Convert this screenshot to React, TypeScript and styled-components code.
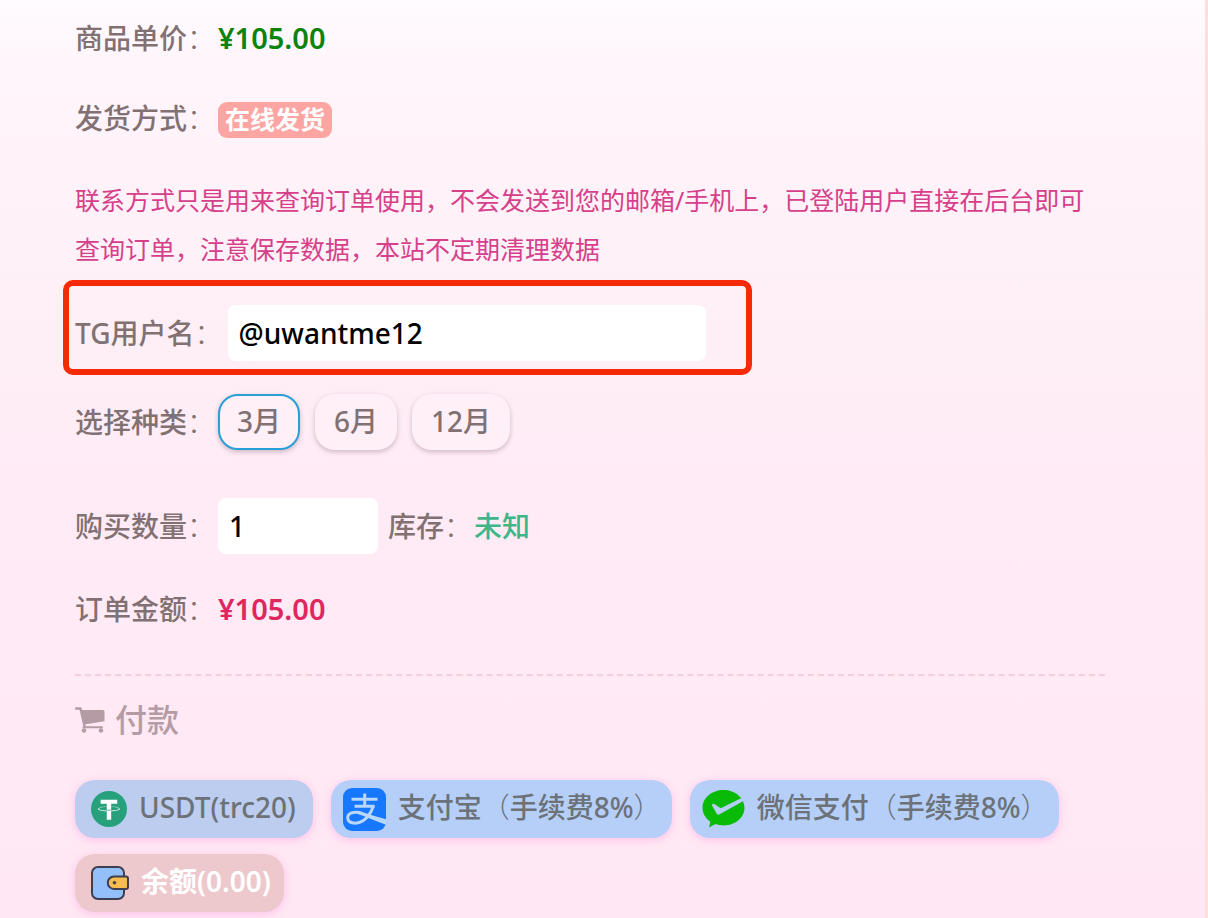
import React, { useState } from "react";
import styled, { createGlobalStyle, css } from "styled-components";

const GlobalStyle = createGlobalStyle`
  *, *::before, *::after { box-sizing: border-box; }
  body { margin: 0; background: #ffe8f3; }
  button, input { font: inherit; }
`;

const Page = styled.main`
  min-height: 100vh;
  padding: 18px 100px 6px 75px;
  border-right: 3px solid #fbdfdf;
  background: linear-gradient(#fffbfe 0, #fff5fb 70px, #feeff6 340px, #ffebf6 480px, #ffe8f3 100%);
  color: #817173;
  font: 500 28px/40px "Noto Sans", "Noto Sans CJK SC", sans-serif;
`;

const Row = styled.div<{ $space: number }>`
  display: flex;
  flex-wrap: wrap;
  align-items: center;
  margin-bottom: ${(p) => p.$space}px;
`;

const labelStyle = css`
  flex: none;
  min-width: 143px;
`;

const Label = styled.span`
  ${labelStyle}
`;

const FieldLabel = styled.label`
  ${labelStyle}
`;

const UserLabel = styled(FieldLabel)`
  padding-right: 5px;
`;

const Mark = styled.span`
  font-weight: 300;
`;

const Price = styled.strong<{ $color: string }>`
  color: ${(p) => p.$color};
  font-size: 29px;
  font-weight: 600;
`;

const Badge = styled.span`
  margin-top: 4px;
  padding: 0 7px 2px;
  border-radius: 9px;
  background: #fda5a3;
  color: #fff;
  font-size: 25px;
  font-weight: 600;
  line-height: 34px;
`;

const Notice = styled.p`
  margin: 0 0 31px;
  color: #d6408a;
  font-size: 25px;
  font-weight: 400;
  line-height: 49px;
`;

const Highlighted = styled(Row)`
  position: relative;

  &::after {
    content: "";
    position: absolute;
    inset: -25px auto -14px -12px;
    width: 689px;
    border: 6px solid #f52a06;
    border-radius: 10px;
    pointer-events: none;
  }
`;

const TextField = styled.input<{ $width: number }>`
  width: ${(p) => p.$width}px;
  height: 56px;
  padding: 0 11px;
  border: 0;
  border-radius: 8px;
  background: #fff;
  color: #000;
  outline: 0;
`;

const Options = styled.div`
  display: flex;
  gap: 15px;
`;

const Option = styled.button<{ $active: boolean }>`
  height: 56px;
  padding: 0 17px 3px;
  border: 2px solid ${(p) => (p.$active ? "#2a9fd6" : "transparent")};
  border-radius: 20px;
  background: #fff0f7;
  box-shadow: 0 2px 5px rgba(90, 60, 75, 0.3);
  color: inherit;
  cursor: pointer;
`;

const Stock = styled.span`
  margin-left: 10px;
`;

const StockValue = styled.span`
  margin-left: 2px;
  color: #3fb58a;
`;

const Divider = styled.hr`
  margin: 0 0 21px;
  border: 0;
  border-top: 2px dashed #f3cfdc;
`;

const Heading = styled.h2`
  display: flex;
  align-items: center;
  gap: 10px;
  margin: 0 0 37px;
  color: #b59ca4;
  font-size: 32px;
  font-weight: 500;
  line-height: 46px;
`;

const Methods = styled.div`
  display: flex;
  flex-wrap: wrap;
  gap: 16px 18px;
`;

const Method = styled.button<{ $color: string; $start: number; $end: number }>`
  display: flex;
  align-items: center;
  gap: 12px;
  height: 58px;
  padding: 0 ${(p) => p.$end}px 0 ${(p) => p.$start}px;
  border: 0;
  border-radius: 20px;
  background: ${(p) => p.$color};
  box-shadow: 0 2px 8px rgba(255, 120, 220, 0.35);
  color: #6c7278;
  cursor: pointer;

  svg { flex: none; }
`;

const MethodName = styled.span<{ $light?: boolean }>`
  padding-bottom: 4px;
  ${(p) => p.$light && "color: #fff; font-weight: 600;"}
`;

const CartIcon = () => (
  <svg width="30" height="26" viewBox="0 0 30 26" aria-hidden="true" fill="none" stroke="currentColor">
    <path d="M1 1.500h4.500l4 17.500" strokeWidth="2.400" strokeLinecap="round" strokeLinejoin="round" />
    <path d="M6.500 3H28a1.500 1.500 0 0 1 1.500 1.500v9.800L9.200 17.500z" fill="currentColor" stroke="none" />
    <path d="M8.500 20.200H27" strokeWidth="2" strokeLinecap="round" />
    <circle cx="9" cy="23.500" r="2.300" fill="currentColor" stroke="none" />
    <circle cx="26" cy="23.500" r="2.300" fill="currentColor" stroke="none" />
  </svg>
);

const TetherIcon = () => (
  <svg width="36" height="36" viewBox="0 0 32 32" aria-hidden="true">
    <circle cx="16" cy="16" r="16" fill="#26a17b" />
    <path
      fill="#fff"
      d="M17.922 17.383v-.002c-.11.008-.677.042-1.942.042-1.01 0-1.721-.03-1.971-.042v.003c-3.888-.171-6.79-.848-6.79-1.658 0-.809 2.902-1.486 6.79-1.66v2.644c.254.018.982.061 1.988.061 1.207 0 1.812-.05 1.925-.06v-2.643c3.88.173 6.775.85 6.775 1.658 0 .81-2.895 1.485-6.775 1.657m0-3.59v-2.366h5.414V7.819H8.595v3.608h5.414v2.365c-4.4.202-7.709 1.074-7.709 2.118 0 1.044 3.309 1.915 7.709 2.118v7.582h3.913v-7.584c4.393-.202 7.694-1.073 7.694-2.116 0-1.043-3.301-1.914-7.694-2.117"
    />
  </svg>
);

const AlipayIcon = () => (
  <svg width="43" height="43" viewBox="0 0 43 43" aria-hidden="true" fill="none" stroke="#b9d6fb">
    <rect width="43" height="43" rx="9" fill="#1677ff" stroke="none" />
    <path d="M8.500 11.200h26M11.500 18.300h20M21.700 5.500v12.500" strokeWidth="3" />
    <path d="M30.500 17.500c-2 6.500-6 12.300-10.500 15.300-5.500 3.600-14.500 3.300-15.300-2.500-.5-5 6-7.500 13.300-5.200" strokeWidth="3" />
    <path d="M15 22.800c5 1 13.500 4.800 28 8.500v5.500C33 33.500 24 28.800 15 26z" fill="#b9d6fb" stroke="none" />
  </svg>
);

const WechatPayIcon = () => (
  <svg width="43" height="38" viewBox="0 0 43 38" aria-hidden="true">
    <path
      fill="#09bb07"
      d="M21.500 0C9.800 0 .5 7.900 .5 17.800c0 5.700 3 10.600 7.800 13.900L7 37.600l6.500-3.500c2.500.9 5.200 1.400 8 1.400 11.700 0 21-7.900 21-17.700S33.200 0 21.500 0z"
    />
    <path
      fill="#b5cff9"
      d="M10 14.500c.7-1 1.800-1 2.800-.2l4.700 3.300c.7.500 1.500.5 2.300.1L40 7.800c1 1 1.600 2 1.800 3L17.600 24.300c-1.300.7-2.300.4-3-.9L10.200 15.800z"
    />
  </svg>
);

const WalletIcon = () => (
  <svg width="38" height="34" viewBox="0 0 38 34" aria-hidden="true" stroke="#3c3f4d" strokeWidth="2">
    <rect x="1" y="1" width="32" height="32" rx="6" fill="#93c0fa" />
    <path d="M35 10.500H23a6.200 6.200 0 0 0 0 12.400h12a2 2 0 0 0 2-2v-8.400a2 2 0 0 0-2-2z" fill="#f8bd4f" />
    <circle cx="23.500" cy="16.700" r="1.300" fill="#3c3f4d" strokeWidth="1" />
  </svg>
);

const kinds = ["3月", "6月", "12月"];

export default function App() {
  const [kind, setKind] = useState(kinds[0]);
  const [user, setUser] = useState("@uwantme12");
  const [count, setCount] = useState("1");

  return (
    <>
      <GlobalStyle />
      <Page>
        <Row $space={40}>
          <Label>商品单价<Mark>：</Mark></Label>
          <Price $color="#0c830c">¥105.00</Price>
        </Row>
        <Row $space={38}>
          <Label>发货方式<Mark>：</Mark></Label>
          <Badge>在线发货</Badge>
        </Row>
        <Notice>
          联系方式只是用来查询订单使用，不会发送到您的邮箱/手机上，已登陆用户直接在后台即可查询订单，注意保存数据，本站不定期清理数据
        </Notice>
        <Highlighted $space={33}>
          <UserLabel htmlFor="tg-user">TG用户名<Mark>：</Mark></UserLabel>
          <TextField id="tg-user" $width={478} value={user} onChange={(e) => setUser(e.target.value)} />
        </Highlighted>
        <Row $space={48}>
          <Label>选择种类<Mark>：</Mark></Label>
          <Options>
            {kinds.map((k) => (
              <Option key={k} type="button" $active={k === kind} aria-pressed={k === kind} onClick={() => setKind(k)}>
                {k}
              </Option>
            ))}
          </Options>
        </Row>
        <Row $space={35}>
          <FieldLabel htmlFor="count">购买数量<Mark>：</Mark></FieldLabel>
          <TextField id="count" $width={160} value={count} onChange={(e) => setCount(e.target.value)} />
          <Stock>
            库存<Mark>：</Mark>
            <StockValue>未知</StockValue>
          </Stock>
        </Row>
        <Row $space={45}>
          <Label>订单金额<Mark>：</Mark></Label>
          <Price $color="#e0265f">¥105.00</Price>
        </Row>
        <Divider />
        <Heading>
          <CartIcon />
          付款
        </Heading>
        <Methods>
          <Method type="button" $color="#bccdf0" $start={16} $end={17}>
            <TetherIcon />
            <MethodName>USDT(trc20)</MethodName>
          </Method>
          <Method type="button" $color="#b5cff9" $start={12} $end={10}>
            <AlipayIcon />
            <MethodName>支付宝<Mark>（</Mark>手续费8%<Mark>）</Mark></MethodName>
          </Method>
          <Method type="button" $color="#b5cff9" $start={12} $end={10}>
            <WechatPayIcon />
            <MethodName>微信支付<Mark>（</Mark>手续费8%<Mark>）</Mark></MethodName>
          </Method>
          <Method type="button" $color="#edc8cc" $start={16} $end={13}>
            <WalletIcon />
            <MethodName $light>余额(0.00)</MethodName>
          </Method>
        </Methods>
      </Page>
    </>
  );
}
